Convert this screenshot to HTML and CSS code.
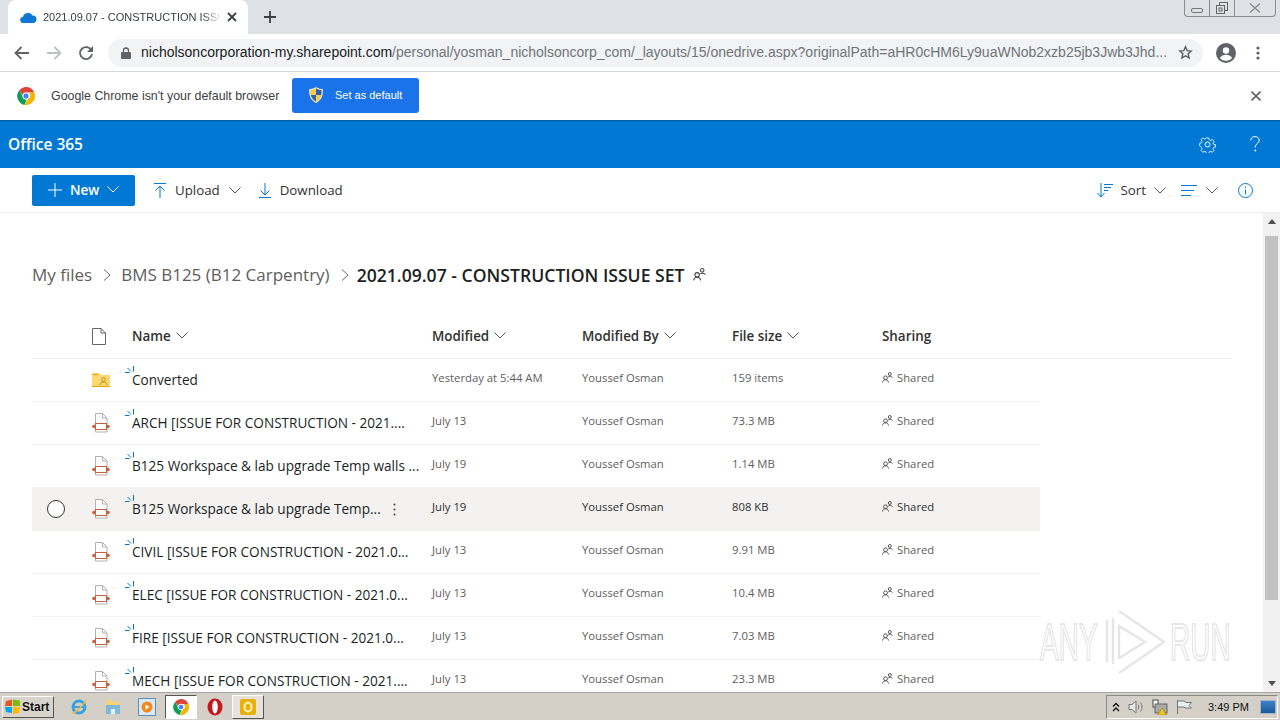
FILE: index.html
```html
<!DOCTYPE html>
<html lang="en">
<head>
    <meta charset="UTF-8">
    <meta name="viewport" content="width=device-width, initial-scale=1.0">
    <title>2021.09.07 - CONSTRUCTION ISSUE SET</title>
    <link rel="stylesheet" href="styles.css">
</head>

<body>
<svg class="defs" width="0" height="0">
    <symbol id="chev" viewBox="0 0 12 7"><path d="M.5.5 6 6 11.500.5" fill="none" stroke="currentColor"/></symbol>
    <symbol id="pdf" viewBox="0 0 18 20">
        <path d="M3.500.5h7l4.500 4.500v14H3.500z" fill="#fff" stroke="#b3b0ad"/>
        <path d="M10.500.5V5H15" fill="none" stroke="#b3b0ad"/>
        <rect x="3.500" y="10.500" width="11" height="6" fill="#fff" stroke="#c8603f"/>
        <circle cx="2" cy="13.500" r="1.800" fill="#c8603f"/>
        <circle cx="16" cy="13.500" r="1.800" fill="#c8603f"/>
    </symbol>
    <symbol id="burst" viewBox="0 0 10 10"><path d="M8.500 0v5.500M0 6.500h4.500M2.500 2 6 5.500" fill="none" stroke="#0078d4"/></symbol>
    <symbol id="people" viewBox="0 0 11 11"><g fill="none" stroke="#444" stroke-width=".9"><circle cx="3.500" cy="5.800" r="1.900"/><path d="M.5 10.500c.3-1.800 1.300-2.700 3-2.700s2.700.9 3 2.700"/><circle cx="7.800" cy="2" r="1.500"/><path d="M6.200 5c1-.9 3.300-.9 4.300.6"/></g></symbol>
</svg>

<header class="tabstrip">
    <div class="tab">
        <svg class="tab__icon" width="17" height="11" viewBox="0 0 17 11"><path d="M3.500 11a3 3 0 0 1-.6-6A5.200 5.200 0 0 1 12.500 3.500 3.800 3.800 0 0 1 13.500 11z" fill="#0f78d4"/></svg>
        <span class="tab__title">2021.09.07 - CONSTRUCTION ISSUE SET</span>
        <svg width="10" height="10" viewBox="0 0 10 10"><path d="M1 1l8 8M9 1 1 9" stroke="#3c4043" stroke-width="1.800"/></svg>
    </div>
    <svg class="tabstrip__plus" width="12" height="12" viewBox="0 0 12 12"><path d="M6 0v12M0 6h12" stroke="#3c4043" stroke-width="1.800"/></svg>
    <div class="winbtns">
        <span class="winbtn"><i class="winbtn__min"></i></span>
        <span class="winbtn"><svg width="12" height="12" viewBox="0 0 12 12" fill="none" stroke="#666"><rect x="3.500" y=".5" width="8" height="8"/><rect x=".5" y="3.500" width="8" height="8" fill="#dee1e6"/><rect x="3" y="6" width="3" height="3"/></svg></span>
        <span class="winbtn winbtn--close"><svg width="12" height="10" viewBox="0 0 12 10" fill="none" stroke="#888" stroke-width="1.200"><path d="M1 .5 11 9.500M11 .5 1 9.500"/></svg></span>
    </div>
</header>

<div class="toolbar">
    <svg width="16" height="14" viewBox="0 0 16 14"><path d="M15 7H2M7.500 1 1.500 7l6 6" fill="none" stroke="#5f6368" stroke-width="1.800"/></svg>
    <svg width="16" height="14" viewBox="0 0 16 14"><path d="M1 7h13M8.500 1l6 6-6 6" fill="none" stroke="#bdc1c6" stroke-width="1.800"/></svg>
    <svg width="16" height="16" viewBox="0 0 16 16"><path d="M13.500 5.500A6 6 0 1 0 14 9" fill="none" stroke="#5f6368" stroke-width="1.800"/><path d="M15 1v6H9z" fill="#5f6368"/></svg>
    <div class="omnibox">
        <svg width="10" height="12" viewBox="0 0 10 12"><path d="M2.500 5V3.500a2.500 2.500 0 0 1 5 0V5" fill="none" stroke="#5f6368" stroke-width="1.300"/><rect y="5" width="10" height="7" rx="1" fill="#5f6368"/></svg>
        <span class="omnibox__url"><b>nicholsoncorporation-my.sharepoint.com</b>/personal/yosman_nicholsoncorp_com/_layouts/15/onedrive.aspx?originalPath=aHR0cHM6Ly9uaWNob2xzb25jb3Jwb3Jhd...</span>
        <svg width="15" height="15" viewBox="0 0 24 24"><path d="m12 3 2.700 6 6.300.7-4.700 4.300 1.300 6.500L12 17.200 6.400 20.500 7.700 14 3 9.700 9.300 9z" fill="none" stroke="#5f6368" stroke-width="2.400"/></svg>
    </div>
    <svg class="toolbar__avatar" width="20" height="20" viewBox="0 0 20 20"><circle cx="10" cy="10" r="10" fill="#5f6368"/><circle cx="10" cy="7.500" r="3.200" fill="#fff"/><path d="M3.800 15c1.500-2.400 3.800-3.200 6.200-3.200s4.700.8 6.200 3.200a8 8 0 0 1-12.400 0z" fill="#fff"/></svg>
    <svg width="4" height="14" viewBox="0 0 4 14"><g fill="#5f6368"><circle cx="2" cy="2" r="1.600"/><circle cx="2" cy="7" r="1.600"/><circle cx="2" cy="12" r="1.600"/></g></svg>
</div>

<div class="infobar">
    <svg width="18" height="18" viewBox="0 0 18 18">
        <path d="M9 0a9 9 0 0 1 8.300 5.500H9a3.500 3.500 0 0 0-3.400 2.700L2.300 3.300A9 9 0 0 1 9 0z" fill="#db4437"/>
        <path d="M2.300 3.300 6 9.800a3.500 3.500 0 0 0 3.800 2.600L7.500 17.900A9 9 0 0 1 2.300 3.300z" fill="#0f9d58"/>
        <path d="M17.300 5.500A9 9 0 0 1 7.500 17.900l3.900-6.300A3.500 3.500 0 0 0 11.700 5.500z" fill="#f4b400"/>
        <circle cx="9" cy="9" r="3.200" fill="#4285f4" stroke="#fff"/>
    </svg>
    <span class="infobar__text">Google Chrome isn't your default browser</span>
    <button class="infobar__btn">
        <svg width="14" height="16" viewBox="0 0 14 16"><path d="M7 .5c2 1.300 4 2 6.500 2 0 5.500-1 10.500-6.500 13C1.500 13 .5 8 .5 2.500 3 2.500 5 1.800 7 .5z" fill="#f6d04d" stroke="#dfe8f5"/><path d="M7 1.500c1.800 1 3.500 1.600 5.500 1.800 0 1.600-.1 3.200-.5 4.700H7zM7 8v6.500C4 12.700 2.500 10.500 1.900 8z" fill="#2f5fb5"/></svg>
        Set as default
    </button>
    <svg class="infobar__close" width="10" height="10" viewBox="0 0 10 10"><path d="M.5.5l9 9M9.500.5l-9 9" stroke="#5f6368" stroke-width="1.600"/></svg>
</div>

<div class="suitebar">
    <span class="suitebar__title">Office 365</span>
    <svg width="17" height="17" viewBox="0 0 17 17" fill="none" stroke="#fff"><circle cx="8.500" cy="8.500" r="2.500"/><path d="M7 .7h3l.5 2.200 1.700.8 2-1.200 2 2.100-1.200 2 .7 1.700 2.200.5v-.3 3l-2.200.5-.7 1.600 1.200 2-2 2.100-2-1.200-1.700.7-.5 2.200H7l-.5-2.200-1.700-.7-2 1.200-2-2.100 1.200-2-.7-1.600L-.9 10V7l2.200-.5.700-1.700-1.200-2 2-2.100 2 1.200 1.700-.8z" transform="translate(1.400 1.400) scale(.84)"/></svg>
    <svg class="suitebar__help" width="10" height="16" viewBox="0 0 10 16" fill="none" stroke="#fff"><path d="M.8 4.500C.8 2 2.500.6 5 .6s4.200 1.500 4.200 3.700c0 3.200-4 3.200-4 7.200"/><circle cx="5.200" cy="14.500" r=".6" fill="#fff"/></svg>
</div>

<div class="cmdbar">
    <button class="cmd-new">
        <svg width="14" height="14" viewBox="0 0 14 14"><path d="M7 0v14M0 7h14" stroke="#fff"/></svg>
        <b>New</b>
        <svg class="chev" width="12" height="7"><use href="#chev"/></svg>
    </button>
    <span class="cmd cmd--first">
        <svg width="12" height="15" viewBox="0 0 12 15" fill="none" stroke="#0078d4"><path d="M0 .5h12M6 3v12M1.500 7.500 6 3l4.500 4.500"/></svg>
        Upload
        <svg class="chev chev--grey" width="12" height="7"><use href="#chev"/></svg>
    </span>
    <span class="cmd cmd--down">
        <svg width="12" height="15" viewBox="0 0 12 15" fill="none" stroke="#0078d4"><path d="M0 14.500h12M6 0v12M1.500 7.500 6 12l4.500-4.500"/></svg>
        Download
    </span>
    <span class="cmd cmd--sort">
        <svg width="16" height="15" viewBox="0 0 16 15" fill="none" stroke="#0078d4"><path d="M4 0v13M.5 10 4 14l3.500-4M7 1.500h9M7 4.500h7M7 7.500h4"/></svg>
        Sort
        <svg class="chev chev--grey" width="12" height="7"><use href="#chev"/></svg>
    </span>
    <span class="cmd cmd--view">
        <svg width="16" height="11" viewBox="0 0 16 11" fill="none" stroke="#0078d4"><path d="M0 .5h16M0 5.500h13M0 10.500h10"/></svg>
        <svg class="chev chev--grey" width="12" height="7"><use href="#chev"/></svg>
    </span>
    <svg class="cmd__info" width="15" height="15" viewBox="0 0 15 15" fill="none" stroke="#0078d4"><circle cx="7.500" cy="7.500" r="7"/><path d="M7.500 6.500V11.500M7.500 3.500v1.500"/></svg>
</div>

<main class="content">
    <div class="files">
        <nav class="crumbs">
            <span>My files</span>
            <svg width="8" height="12" viewBox="0 0 8 12"><path d="M1 .5 7 6l-6 5.500" fill="none" stroke="#666"/></svg>
            <span>BMS B125 (B12 Carpentry)</span>
            <svg width="8" height="12" viewBox="0 0 8 12"><path d="M1 .5 7 6l-6 5.500" fill="none" stroke="#666"/></svg>
            <strong>2021.09.07 - CONSTRUCTION ISSUE SET</strong>
            <svg class="crumbs__people" width="13" height="13"><use href="#people"/></svg>
        </nav>

        <div class="head">
            <svg class="row__icon" width="14" height="17" viewBox="0 0 14 17"><path d="M.5.5h8.500l4.500 4.500v11.500H.5zM9 .5V5h4.500" fill="#fff" stroke="#666"/></svg>
            <span class="head__cell">Name <svg class="chev chev--grey" width="12" height="7"><use href="#chev"/></svg></span>
            <span class="head__cell">Modified <svg class="chev chev--grey" width="12" height="7"><use href="#chev"/></svg></span>
            <span class="head__cell">Modified By <svg class="chev chev--grey" width="12" height="7"><use href="#chev"/></svg></span>
            <span class="head__cell">File size <svg class="chev chev--grey" width="12" height="7"><use href="#chev"/></svg></span>
            <span class="head__cell">Sharing</span>
        </div>

        <div class="row">
            <svg class="row__icon" width="18" height="14" viewBox="0 0 18 14"><path d="M0 0h7l2 2h9v12H0z" fill="#fcd873"/><path d="M0 13h18v1H0z" fill="#eaa300"/><path d="M1 1h5v1H1z" fill="#eaa300"/><g fill="none" stroke="#c58a12"><circle cx="11.500" cy="6.500" r="1.800"/><path d="M8 12c.3-2 1.500-3 3.500-3s3.200 1 3.500 3"/></g></svg>
            <span class="row__name"><svg class="burst" width="10" height="10"><use href="#burst"/></svg>Converted</span>
            <span class="row__meta">Yesterday at 5:44 AM</span>
            <span class="row__meta">Youssef Osman</span>
            <span class="row__meta">159 items</span>
            <span class="row__meta row__share"><svg width="11" height="11"><use href="#people"/></svg>Shared</span>
        </div>
        <div class="row">
            <svg class="row__icon" width="18" height="20"><use href="#pdf"/></svg>
            <span class="row__name"><svg class="burst" width="10" height="10"><use href="#burst"/></svg>ARCH [ISSUE FOR CONSTRUCTION - 2021....</span>
            <span class="row__meta">July 13</span>
            <span class="row__meta">Youssef Osman</span>
            <span class="row__meta">73.3 MB</span>
            <span class="row__meta row__share"><svg width="11" height="11"><use href="#people"/></svg>Shared</span>
        </div>
        <div class="row">
            <svg class="row__icon" width="18" height="20"><use href="#pdf"/></svg>
            <span class="row__name"><svg class="burst" width="10" height="10"><use href="#burst"/></svg>B125 Workspace &amp; lab upgrade Temp walls ...</span>
            <span class="row__meta">July 19</span>
            <span class="row__meta">Youssef Osman</span>
            <span class="row__meta">1.14 MB</span>
            <span class="row__meta row__share"><svg width="11" height="11"><use href="#people"/></svg>Shared</span>
        </div>
        <div class="row row--hover">
            <i class="row__check"></i>
            <svg class="row__icon" width="18" height="20"><use href="#pdf"/></svg>
            <span class="row__name"><svg class="burst" width="10" height="10"><use href="#burst"/></svg>B125 Workspace &amp; lab upgrade Temp...</span>
            <svg class="row__more" width="3" height="13" viewBox="0 0 3 13"><g fill="#444"><circle cx="1.500" cy="1.500" r="1"/><circle cx="1.500" cy="6.500" r="1"/><circle cx="1.500" cy="11.500" r="1"/></g></svg>
            <span class="row__meta">July 19</span>
            <span class="row__meta">Youssef Osman</span>
            <span class="row__meta">808 KB</span>
            <span class="row__meta row__share"><svg width="11" height="11"><use href="#people"/></svg>Shared</span>
        </div>
        <div class="row">
            <svg class="row__icon" width="18" height="20"><use href="#pdf"/></svg>
            <span class="row__name"><svg class="burst" width="10" height="10"><use href="#burst"/></svg>CIVIL [ISSUE FOR CONSTRUCTION - 2021.0...</span>
            <span class="row__meta">July 13</span>
            <span class="row__meta">Youssef Osman</span>
            <span class="row__meta">9.91 MB</span>
            <span class="row__meta row__share"><svg width="11" height="11"><use href="#people"/></svg>Shared</span>
        </div>
        <div class="row">
            <svg class="row__icon" width="18" height="20"><use href="#pdf"/></svg>
            <span class="row__name"><svg class="burst" width="10" height="10"><use href="#burst"/></svg>ELEC [ISSUE FOR CONSTRUCTION - 2021.0...</span>
            <span class="row__meta">July 13</span>
            <span class="row__meta">Youssef Osman</span>
            <span class="row__meta">10.4 MB</span>
            <span class="row__meta row__share"><svg width="11" height="11"><use href="#people"/></svg>Shared</span>
        </div>
        <div class="row">
            <svg class="row__icon" width="18" height="20"><use href="#pdf"/></svg>
            <span class="row__name"><svg class="burst" width="10" height="10"><use href="#burst"/></svg>FIRE [ISSUE FOR CONSTRUCTION - 2021.0...</span>
            <span class="row__meta">July 13</span>
            <span class="row__meta">Youssef Osman</span>
            <span class="row__meta">7.03 MB</span>
            <span class="row__meta row__share"><svg width="11" height="11"><use href="#people"/></svg>Shared</span>
        </div>
        <div class="row">
            <svg class="row__icon" width="18" height="20"><use href="#pdf"/></svg>
            <span class="row__name"><svg class="burst" width="10" height="10"><use href="#burst"/></svg>MECH [ISSUE FOR CONSTRUCTION - 2021....</span>
            <span class="row__meta">July 13</span>
            <span class="row__meta">Youssef Osman</span>
            <span class="row__meta">23.3 MB</span>
            <span class="row__meta row__share"><svg width="11" height="11"><use href="#people"/></svg>Shared</span>
        </div>
    </div>

    <div class="scrollbar">
        <i class="scrollbar__up"></i>
        <div class="scrollbar__thumb"></div>
        <i class="scrollbar__down"></i>
    </div>

    <div class="watermark">
        <span class="watermark__text">ANY</span>
        <svg width="62" height="64" viewBox="0 0 62 64" fill="none" stroke="#e6e6e6" stroke-width="2.500"><path d="M8 8v46M14 1l45 31-45 31M14 16l26 16-26 16z"/><path d="M2 10v42"/></svg>
        <span class="watermark__text">RUN</span>
    </div>
</main>

<footer class="taskbar">
    <button class="start">
        <svg width="16" height="15" viewBox="0 0 16 15"><path d="M1 2l6-1.500v6.500H0z" fill="#e8562a"/><path d="M8 .5l7 1v5.500H8z" fill="#7fba00"/><path d="M0 8h7v6L1 13z" fill="#00a4ef"/><path d="M8 8h7l-1 6-6 1z" fill="#ffb900"/></svg>
        Start
    </button>
    <span class="task" >
        <svg width="18" height="18" viewBox="0 0 18 18"><circle cx="9" cy="9" r="6" fill="none" stroke="#3aa0e0" stroke-width="3"/><path d="M4 9h11" stroke="#3aa0e0" stroke-width="2"/><path d="M2 15C5 16 14 6 16 2" fill="none" stroke="#e9b93a" stroke-width="1.500"/></svg>
    </span>
    <span class="task">
        <svg width="16" height="16" viewBox="0 0 16 16"><path d="M1 1h6l1 2h7v12H1z" fill="#f3d27a"/><path d="M1 6h14v9H1z" fill="#7fb8d8"/><path d="M6 10h4v5H6z" fill="#e8f2f8"/></svg>
    </span>
    <span class="task">
        <svg width="18" height="18" viewBox="0 0 18 18"><rect x=".5" y=".5" width="17" height="17" fill="#dbe8f5" stroke="#5a8fc4"/><circle cx="9" cy="9" r="5.500" fill="#f08a1c"/><path d="M7.500 6.500v5l4-2.500z" fill="#fff"/></svg>
    </span>
    <span class="task task--active">
        <svg width="16" height="16" viewBox="0 0 18 18"><path d="M9 0a9 9 0 0 1 8.300 5.500H9a3.500 3.500 0 0 0-3.400 2.700L2.300 3.300A9 9 0 0 1 9 0z" fill="#db4437"/><path d="M2.300 3.300 6 9.800a3.500 3.500 0 0 0 3.800 2.600L7.500 17.900A9 9 0 0 1 2.300 3.300z" fill="#0f9d58"/><path d="M17.300 5.500A9 9 0 0 1 7.500 17.900l3.900-6.300A3.500 3.500 0 0 0 11.700 5.500z" fill="#f4b400"/><circle cx="9" cy="9" r="3.200" fill="#4285f4" stroke="#fff"/></svg>
    </span>
    <span class="task task--opera">
        <svg width="16" height="18" viewBox="0 0 16 18"><ellipse cx="8" cy="9" rx="7.500" ry="8.500" fill="#c8161d"/><ellipse cx="8" cy="9" rx="2.800" ry="6.500" fill="#fff"/></svg>
    </span>
    <span class="task task--raised">
        <svg width="16" height="16" viewBox="0 0 16 16"><rect width="16" height="16" rx="2" fill="#e8b10e"/><ellipse cx="8" cy="8" rx="3.500" ry="4.500" fill="none" stroke="#fff3c0" stroke-width="2"/></svg>
    </span>
    <div class="tray">
        <svg width="8" height="10" viewBox="0 0 8 10" fill="none" stroke="#111" stroke-width="1.400"><path d="M1 4.500 4 1.500l3 3M1 9 4 6l3 3"/></svg>
        <svg width="16" height="14" viewBox="0 0 16 14" fill="none" stroke="#777"><path d="M1 4.500h3L8 1v12L4 9.500H1z" fill="#e8e8e8"/><path d="M10 4.500c1 1.500 1 3.500 0 5M12.500 2.500c2 2.500 2 6.500 0 9"/></svg>
        <svg width="16" height="16" viewBox="0 0 16 16"><rect x="1" y="1" width="5" height="7" fill="#fff" stroke="#444"/><rect x="3" y="5" width="12" height="9" fill="#a9a9a9" stroke="#666"/><path d="M10 9l4.500 7h-9z" fill="#f5c518" stroke="#8a6d00" stroke-width=".5"/></svg>
        <svg width="16" height="14" viewBox="0 0 16 14" fill="none" stroke="#777"><path d="M1.500 0v14M1.500 1h7l1 1.500h6L13 5.500l2.500 2.500H9L8 7H1.500" fill="#eee"/></svg>
        <span class="tray__time">3:49 PM</span>
        <i class="tray__desktop"></i>
    </div>
</footer>
</body>
</html>
```

FILE: styles.css
```css
html {
    box-sizing: border-box;
}

*,
*::before,
*::after {
    box-sizing: inherit;
}

body {
    margin: 0;
    width: 1280px;
    height: 720px;
    overflow: hidden;
    display: flex;
    flex-direction: column;
    font-family: "Open Sans", "Noto Sans", sans-serif;
    color: #323130;
    background: #fff;
}

button {
    font: inherit;
    border: 0;
    padding: 0;
}

.defs {
    position: absolute;
}

svg {
    flex: none;
    display: block;
}

/* browser */
.tabstrip {
    height: 34px;
    background: #dee1e6;
    display: flex;
    align-items: flex-end;
    padding-left: 8px;
    flex: none;
}

.tab {
    width: 240px;
    height: 34px;
    background: #fff;
    border-radius: 8px 8px 0 0;
    display: flex;
    align-items: center;
    padding: 0 11px 0 12px;
    gap: 6px;
}

.tab__title {
    flex: 1;
    overflow: hidden;
    white-space: nowrap;
    font-family: "Liberation Sans", sans-serif;
    font-size: 11px;
    color: #3c4043;
    -webkit-mask-image: linear-gradient(to right, #000 90%, transparent);
    mask-image: linear-gradient(to right, #000 90%, transparent);
}

.tabstrip__plus {
    margin: 0 0 11px 16px;
}

.winbtns {
    margin: 0 4px auto auto;
    height: 17px;
    width: 92px;
    display: flex;
    border: 1px solid #8a8d93;
    border-top: 0;
    border-radius: 0 0 4px 4px;
}

.winbtn {
    flex: 25;
    display: flex;
    align-items: center;
    justify-content: center;
    border-right: 1px solid #8a8d93;
}

.winbtn--close {
    flex: 42;
    border-right: 0;
}

.winbtn__min {
    width: 12px;
    height: 5px;
    margin-top: 4px;
    border: 1px solid #777;
    border-radius: 2px;
}

.toolbar {
    height: 38px;
    flex: none;
    display: flex;
    align-items: center;
    padding: 0 19px 0 14px;
    border-bottom: 1px solid #d6d7d9;
}

.toolbar > svg:nth-child(2) {
    margin-left: 16px;
}

.toolbar > svg:nth-child(3) {
    margin-left: 16px;
}

.omnibox {
    width: 1095px;
    height: 28px;
    margin-left: 14px;
    background: #f1f3f4;
    border-radius: 14px;
    display: flex;
    align-items: center;
    padding: 0 10px 0 13px;
}

.omnibox__url {
    flex: 1;
    margin: 0 12px 1px 10px;
    white-space: nowrap;
    overflow: hidden;
    font-family: "Liberation Sans", sans-serif;
    font-size: 14px;
    color: #70757a;
}

.omnibox__url b {
    font-weight: 400;
    color: #202124;
}

.toolbar__avatar {
    margin: 0 20px 0 13px;
}

.infobar {
    height: 48px;
    flex: none;
    display: flex;
    align-items: center;
    padding-left: 17px;
}

.infobar__text {
    margin-left: 16px;
    width: 241px;
    font-family: "Liberation Sans", sans-serif;
    font-size: 12.400px;
    color: #3c4043;
    white-space: nowrap;
}

.infobar__btn {
    width: 127px;
    height: 35px;
    margin-top: -2px;
    background: #1a73e8;
    color: #fff;
    border-radius: 3px;
    display: flex;
    align-items: center;
    gap: 12px;
    padding-left: 17px;
    font-family: "Liberation Sans", sans-serif;
    font-size: 11px;
}

.infobar__close {
    margin-left: auto;
    margin-right: 19px;
}

/* onedrive */
.suitebar {
    height: 48px;
    flex: none;
    background: #0078d4;
    box-shadow: inset 0 2px 1px -1px #005a9e;
    display: flex;
    align-items: center;
    padding-left: 8px;
    color: #fff;
}

.suitebar__title {
    flex: 1;
    font-size: 15.500px;
    font-weight: 600;
}

.suitebar__help {
    margin: 0 20px 0 34px;
}

.cmdbar {
    height: 45px;
    flex: none;
    display: flex;
    align-items: center;
    padding: 0 27px 0 32px;
    border-bottom: 1px solid #eeeeee;
}

.cmd-new {
    width: 103px;
    height: 31px;
    padding: 0 0 1px 16px;
    background: #0078d4;
    color: #fff;
    border-radius: 2px;
    display: flex;
    align-items: center;
    gap: 8px;
    font-size: 13.500px;
}

.cmd-new b {
    font-weight: 600;
}

.cmd {
    display: flex;
    align-items: center;
    gap: 9px;
    margin-left: 19px;
    font-size: 13.300px;
}

.cmd--down {
    margin-left: 18px;
}

.cmd--sort {
    margin-left: auto;
    gap: 8px;
}

.cmd--view {
    margin-left: 15px;
    gap: 9px;
}

.cmd__info {
    margin-left: 20px;
}

.chev--grey {
    color: #555;
}

.content {
    flex: 1;
    min-height: 0;
    display: flex;
    position: relative;
    overflow: hidden;
}

.files {
    flex: 1;
    padding: 0 31px 0 32px;
}

.crumbs {
    height: 102px;
    padding-top: 21px;
    display: flex;
    align-items: center;
    font-size: 17px;
    color: #605e5c;
    white-space: nowrap;
}

.crumbs svg {
    margin: 0 10px 0 11px;
}

.crumbs strong {
    margin-left: -2px;
    font-weight: 600;
    font-size: 17.600px;
    color: #201f1e;
}

.crumbs .crumbs__people {
    margin-left: 8px;
}

.head {
    display: grid;
    grid-template-columns: 100px 300px 150px 150px 150px 1fr;
    align-items: center;
    height: 44px;
    border-bottom: 1px solid #edebe9;
}

.head__cell {
    display: flex;
    align-items: center;
    gap: 5px;
    margin-bottom: 2px;
    font-size: 13.400px;
    font-weight: 600;
}

.row__icon {
    margin-left: 60px;
}

.row {
    display: grid;
    grid-template-columns: 100px 300px 150px 150px 150px 158px;
    align-items: center;
    width: 1008px;
    height: 43px;
    border-bottom: 1px solid #f3f2f1;
    position: relative;
}

.row--hover {
    background: #f3f2f1;
}

.row__check {
    position: absolute;
    left: 15px;
    top: 12px;
    width: 18px;
    height: 18px;
    border-radius: 50%;
    border: 1px solid #333;
    background: #fff;
}

.row__name {
    position: relative;
    font-size: 13.600px;
    margin-top: -1px;
    color: #201f1e;
    white-space: nowrap;
}

.burst {
    position: absolute;
    left: -7px;
    top: -4px;
}

.row__more {
    position: absolute;
    left: 361px;
    top: 15px;
}

.row__meta {
    margin-bottom: 6px;
    font-size: 11.300px;
    color: #605e5c;
    white-space: nowrap;
}

.row--hover .row__meta {
    color: #323130;
}

.row__share {
    display: flex;
    align-items: center;
    gap: 4px;
}

.scrollbar {
    width: 17px;
    flex: none;
    background: #f1f1f1;
    display: flex;
    flex-direction: column;
    align-items: center;
}

.scrollbar__thumb {
    width: 13px;
    height: 364px;
    margin: 12px 0 auto;
    background: #c1c1c1;
}

.scrollbar__up,
.scrollbar__down {
    width: 0;
    height: 0;
    border-left: 4.500px solid transparent;
    border-right: 4.500px solid transparent;
}

.scrollbar__up {
    margin-top: 6px;
    border-bottom: 5px solid #505050;
}

.scrollbar__down {
    margin-bottom: 6px;
    border-top: 5px solid #505050;
}

.watermark {
    position: absolute;
    left: 1040px;
    top: 397px;
    width: 192px;
    height: 64px;
    display: flex;
    align-items: center;
    justify-content: space-between;
}

.watermark__text {
    width: 62px;
    white-space: nowrap;
    font-family: "Liberation Sans", sans-serif;
    font-size: 52px;
    line-height: 1;
    color: #fff;
    -webkit-text-stroke: 2px #e6e6e6;
    transform: scaleX(0.54);
    transform-origin: left center;
}

/* windows taskbar */
.taskbar {
    height: 28px;
    flex: none;
    background: #d4d0c8;
    border-top: 1px solid #a6a6a6;
    display: flex;
    align-items: center;
    padding-left: 2px;
    position: relative;
}

.start {
    width: 52px;
    height: 22px;
    background: #d8d4cc;
    border: 1px solid;
    border-color: #fff #555 #555 #fff;
    display: flex;
    align-items: center;
    gap: 1px;
    padding-left: 2px;
    margin-right: 8px;
    font-family: "Liberation Sans", sans-serif;
    font-size: 12px;
    font-weight: 700;
    color: #111;
}

.task {
    width: 34px;
    height: 24px;
    display: flex;
    align-items: center;
    justify-content: center;
}

.task--active {
    width: 32px;
    background: #fff;
    border: 1px solid;
    border-color: #555 #fff #fff #555;
    margin-left: 1px;
}

.task--opera {
    margin-left: 1px;
}

.task--raised {
    width: 32px;
    background: #e6e2da;
    border: 1px solid;
    border-color: #fff #555 #555 #fff;
}

.tray {
    margin: 0 2px 0 auto;
    width: 172px;
    height: 24px;
    border: 1px solid;
    border-color: #888 #fff #fff #888;
    display: flex;
    align-items: center;
    padding-left: 5px;
    gap: 8px;
}

.tray__time {
    margin-left: 8px;
    font-family: "Liberation Sans", sans-serif;
    font-size: 11px;
    color: #111;
    white-space: nowrap;
}

.tray__desktop {
    flex: none;
    width: 16px;
    height: 14px;
    margin-left: 3px;
    background: linear-gradient(#3f82c9, #1c5a9a);
    border: 1px solid #9fb6cc;
}
```
